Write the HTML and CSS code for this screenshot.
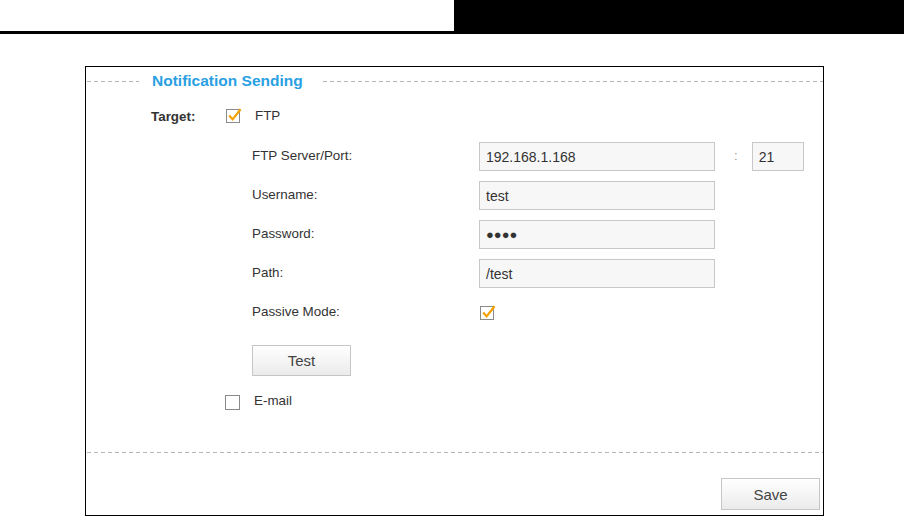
FILE: index.html
```html
<!DOCTYPE html>
<html lang="en">
<head>
    <meta charset="UTF-8">
    <title>Notification Sending</title>
    <link rel="stylesheet" href="styles.css">
</head>
<body>

<div class="topbar">
    <div class="topbar-left"></div>
    <div class="topbar-right"></div>
</div>

<div class="panel">
    <div class="legend">
        <span class="dash dash-short"></span>
        <span class="legend-title">Notification Sending</span>
        <span class="dash dash-long"></span>
    </div>

    <div class="content">
        <div class="target-row">
            <span class="target-label">Target:</span>
            <span class="check">
                <svg width="16" height="16" viewBox="0 0 16 16"><rect x="0.5" y="1.5" width="13" height="13" fill="#fff" stroke="#8a8a8a"/><path d="M3.2 7.6 L6.6 11.4 L14.6 1.2" fill="none" stroke="#f5a000" stroke-width="2.2"/></svg>
            </span>
            <span class="check-label">FTP</span>
        </div>

        <div class="ftp-form">
            <div class="form-row">
                <label class="field-label">FTP Server/Port:</label>
                <input class="field" type="text" value="192.168.1.168">
                <span class="colon">:</span>
                <input class="field field-port" type="text" value="21">
            </div>
            <div class="form-row">
                <label class="field-label">Username:</label>
                <input class="field" type="text" value="test">
            </div>
            <div class="form-row">
                <label class="field-label">Password:</label>
                <input class="field field-pass" type="text" value="●●●●">
            </div>
            <div class="form-row">
                <label class="field-label">Path:</label>
                <input class="field" type="text" value="/test">
            </div>
            <div class="form-row row-check">
                <label class="field-label">Passive Mode:</label>
                <span class="check">
                    <svg width="16" height="16" viewBox="0 0 16 16"><rect x="0.5" y="1.5" width="13" height="13" fill="#fff" stroke="#8a8a8a"/><path d="M3.2 7.6 L6.6 11.4 L14.6 1.2" fill="none" stroke="#f5a000" stroke-width="2.2"/></svg>
                </span>
            </div>
            <button class="btn btn-test">Test</button>
        </div>

        <div class="email-row">
            <span class="check">
                <svg width="16" height="16" viewBox="0 0 16 16"><rect x="0.5" y="0.5" width="14" height="14" fill="#fff" stroke="#8a8a8a"/></svg>
            </span>
            <span class="check-label email-label">E-mail</span>
        </div>
    </div>

    <div class="divider"></div>

    <div class="footer">
        <button class="btn btn-save">Save</button>
    </div>
</div>

</body>
</html>
```

FILE: styles.css
```css
body {
    margin: 0;
    padding: 0;
    background: #fff;
    font-family: "Liberation Sans", Arial, sans-serif;
    color: #333;
}

.topbar {
    display: flex;
    height: 34px;
}

.topbar-left {
    width: 454px;
    height: 31px;
    border-bottom: 3px solid #000;
}

.topbar-right {
    flex: 1;
    background: #000;
}

.panel {
    margin: 32px 0 0 85px;
    width: 737px;
    height: 448px;
    border: 1px solid #000;
}

.legend {
    display: flex;
    align-items: center;
    height: 16px;
    margin-top: 6px;
}

.dash {
    height: 1px;
    background: repeating-linear-gradient(to right, #b5b5b5 0, #b5b5b5 4px, transparent 4px, transparent 7px);
}

.dash-short {
    width: 52px;
    margin-left: 1px;
}

.dash-long {
    flex: 1;
}

.legend-title {
    padding: 0 20px 0 13px;
    font-size: 15.5px;
    font-weight: bold;
    line-height: 16px;
    color: #2a9fe2;
}

.content {
    padding-left: 65px;
}

.target-row {
    display: flex;
    align-items: center;
    height: 16px;
    margin-top: 19px;
    font-size: 13px;
}

.target-label {
    width: 75px;
    font-weight: bold;
    font-size: 13.4px;
}

.check {
    display: inline-flex;
    width: 16px;
    height: 16px;
}

.check svg {
    overflow: visible;
}

.check-label {
    margin-left: 13px;
    font-size: 13.4px;
    margin-top: -1px;
}

.email-label {
    margin-top: -5px;
}

.ftp-form {
    margin: 18px 0 0 101px;
}

.form-row {
    display: flex;
    align-items: center;
    height: 29px;
    margin-bottom: 10px;
}

.field-label {
    width: 227px;
    font-size: 13.4px;
    margin-top: -3px;
}

.field {
    box-sizing: border-box;
    width: 236px;
    height: 29px;
    margin: 0;
    padding: 0 6px;
    border: 1px solid #c8c8c8;
    background: #f7f7f7;
    font-family: "Liberation Sans", Arial, sans-serif;
    font-size: 14px;
    color: #333;
    outline: none;
}

.field-pass {
    font-size: 13px;
    letter-spacing: 0;
}

.colon {
    margin: -2px 14px 0 19px;
    font-size: 13px;
    color: #999;
}

.field-port {
    width: 52px;
}

.row-check .check {
    margin-left: 1px;
}

.btn {
    box-sizing: border-box;
    width: 99px;
    border: 1px solid #c6c6c6;
    background: linear-gradient(#ffffff, #ebebeb);
    font-family: "Liberation Sans", Arial, sans-serif;
    font-size: 15px;
    color: #444;
    padding: 0;
}

.btn-test {
    height: 31px;
    margin-top: 8px;
}

.email-row {
    display: flex;
    align-items: center;
    height: 16px;
    margin: 19px 0 0 74px;
}

.divider {
    height: 1px;
    margin: 41px 0 0 1px;
    background: repeating-linear-gradient(to right, #b5b5b5 0, #b5b5b5 4px, transparent 4px, transparent 7px);
}

.footer {
    display: flex;
    justify-content: flex-end;
    padding: 25px 3px 0 0;
}

.btn-save {
    height: 32px;
}
```
